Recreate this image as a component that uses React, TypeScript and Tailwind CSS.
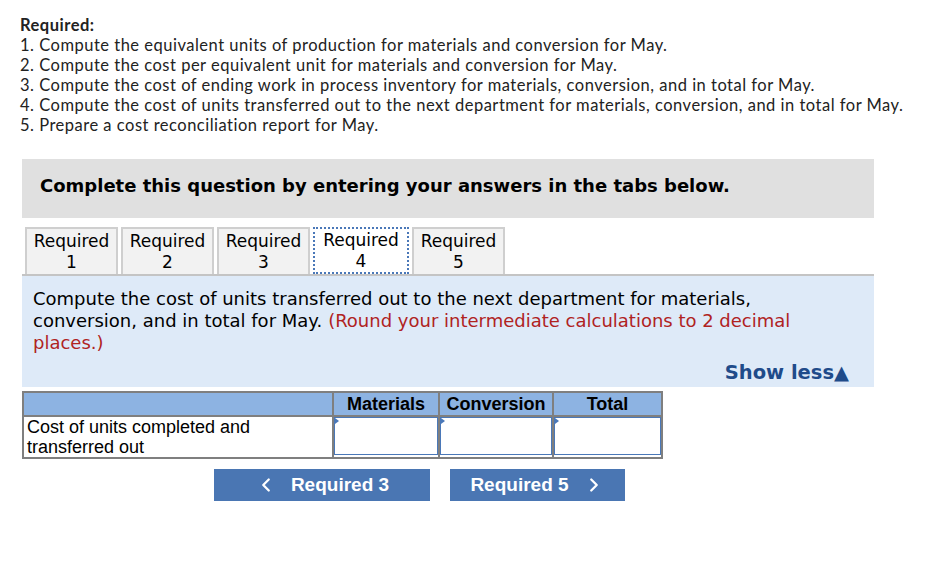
import { ChevronLeft, ChevronRight } from "lucide-react";

const requirements = [
  "1. Compute the equivalent units of production for materials and conversion for May.",
  "2. Compute the cost per equivalent unit for materials and conversion for May.",
  "3. Compute the cost of ending work in process inventory for materials, conversion, and in total for May.",
  "4. Compute the cost of units transferred out to the next department for materials, conversion, and in total for May.",
  "5. Prepare a cost reconciliation report for May.",
];

const tabs = ["1", "2", "3", "4", "5"];

function InputCell({ w }: { w: string }) {
  return (
    <td className={`${w} border-2 border-[#7f7f7f] p-0 align-top`}>
      <div className="relative h-[38px] border border-[#4a78b8] bg-white">
        <span className="absolute left-0 top-0 h-0 w-0 border-y-[3px] border-l-[4px] border-y-transparent border-l-[#4a78b8]" />
      </div>
    </td>
  );
}

export default function App() {
  return (
    <div className="h-[570px] w-[930px] bg-white pt-[15px]">
      <div className="px-5 font-['Lato',sans-serif] text-[16.5px] leading-[20px] tracking-[0.5px] text-[#222]">
        <div className="font-bold">Required:</div>
        {requirements.map((r) => (
          <div key={r}>{r}</div>
        ))}
      </div>

      <div className="ml-[22px] mt-[24px] w-[852px]">
        <div className="flex h-[59px] items-center bg-[#e0e0e0] pb-[6px] pl-[18px] font-['DejaVu_Sans',Verdana,sans-serif] text-[18px] font-bold text-black">
          Complete this question by entering your answers in the tabs below.
        </div>

        <div className="mt-[9px] flex gap-[3px] border-b-2 border-[#c4c4c4] pl-[3px] font-['DejaVu_Sans',Verdana,sans-serif] text-[17px] leading-[21px] text-black">
          {tabs.map((t) => (
            <div
              key={t}
              className={
                t === "4"
                  ? "flex h-[47px] w-[96px] flex-col items-center justify-center border-2 border-dotted border-[#4a78b8] bg-white"
                  : "flex h-[47px] w-[93px] flex-col items-center justify-center border-2 border-b-0 border-[#cfcfcf] bg-[#f2f2f2]"
              }
            >
              <span>Required</span>
              <span>{t}</span>
            </div>
          ))}
        </div>

        <div className="h-[111px] bg-[#deeaf8] px-[11px] pt-[12px] font-['DejaVu_Sans',Verdana,sans-serif] text-[18px] leading-[22px] text-black">
          <div>Compute the cost of units transferred out to the next department for materials,</div>
          <div className="flex gap-[6px]">
            <span>conversion, and in total for May.</span>
            <span className="text-[#b0231f]">(Round your intermediate calculations to 2 decimal</span>
          </div>
          <div className="text-[#b0231f]">places.)</div>
          <div className="mt-[8px] pr-[14px] text-right text-[19.5px] font-bold text-[#1f4b8a]">Show less▲</div>
        </div>
      </div>

      <table className="ml-[22px] mt-[4px] border-collapse font-['Liberation_Sans',Arial,sans-serif] text-black">
        <thead>
          <tr className="h-[24px] bg-[#8db3e2] text-[18px] font-bold">
            <th className="w-[310px] border-2 border-[#7f7f7f]"></th>
            <th className="w-[106px] border-2 border-[#7f7f7f] leading-[20px]">Materials</th>
            <th className="w-[114px] border-2 border-[#7f7f7f] leading-[20px]">Conversion</th>
            <th className="w-[109px] border-2 border-[#7f7f7f] leading-[20px]">Total</th>
          </tr>
        </thead>
        <tbody>
          <tr className="text-[18px] leading-[20px]">
            <td className="border-2 border-[#7f7f7f] px-[3px] align-top">
              <div>Cost of units completed and</div>
              <div>transferred out</div>
            </td>
            <InputCell w="w-[106px]" />
            <InputCell w="w-[114px]" />
            <InputCell w="w-[109px]" />
          </tr>
        </tbody>
      </table>

      <div className="ml-[214px] mt-[10px] flex gap-[20px] font-['Liberation_Sans',Arial,sans-serif] text-[19px] font-bold text-white">
        <button className="flex h-[32px] w-[216px] items-center justify-center gap-[14px] bg-[#4a76b3]">
          <ChevronLeft size={22} strokeWidth={2.5} />
          <span>Required 3</span>
        </button>
        <button className="flex h-[32px] w-[175px] items-center justify-center gap-[14px] bg-[#4a76b3]">
          <span>Required 5</span>
          <ChevronRight size={22} strokeWidth={2.5} />
        </button>
      </div>
    </div>
  );
}
